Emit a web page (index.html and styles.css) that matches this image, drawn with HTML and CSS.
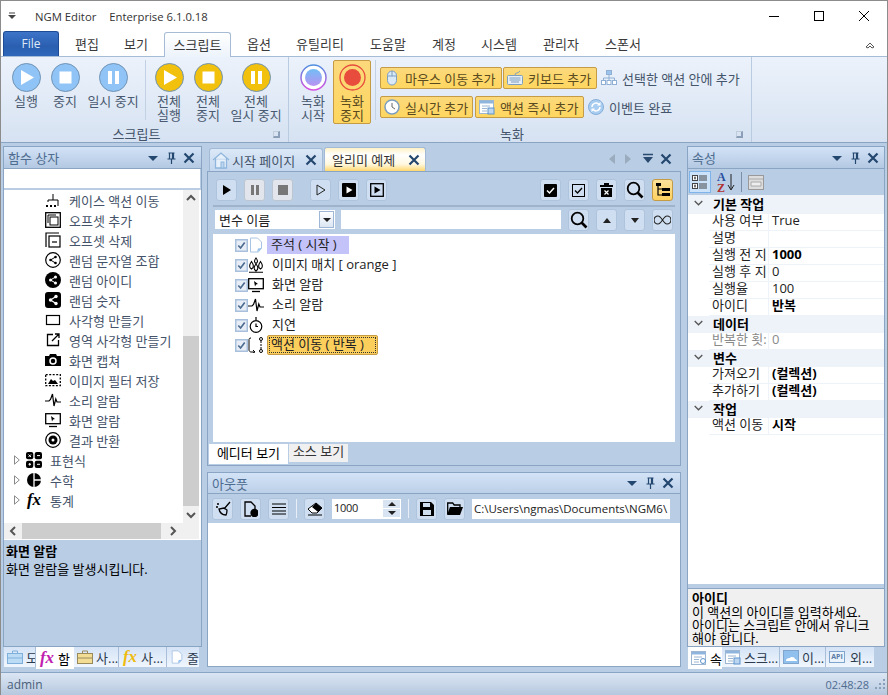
FILE: index.html

```html
<!DOCTYPE html>
<html lang="ko">
<head>
    <meta charset="UTF-8">
    <meta name="viewport" content="width=device-width, initial-scale=1.0">
    <title>NGM Editor</title>
    <link rel="stylesheet" href="styles.css">
</head>
<body>

<svg class="defs">
    <symbol id="play" viewBox="0 0 29 29"><circle cx="14.5" cy="14.5" r="14" fill="currentColor" stroke="#6f93b5"/><path d="M9 7l13 7.500-13 7.500z" fill="#fff"/></symbol>
    <symbol id="stop" viewBox="0 0 29 29"><circle cx="14.5" cy="14.5" r="14" fill="currentColor" stroke="#6f93b5"/><rect x="8.500" y="8.500" width="12" height="12" fill="#fff"/></symbol>
    <symbol id="pause" viewBox="0 0 29 29"><circle cx="14.5" cy="14.5" r="14" fill="currentColor" stroke="#6f93b5"/><rect x="9" y="8" width="4" height="13" fill="#fff"/><rect x="16" y="8" width="4" height="13" fill="#fff"/></symbol>
    <symbol id="close" viewBox="0 0 12 12"><path d="M1.500 1.500l9 9M10.500 1.500l-9 9" fill="none" stroke="currentColor" stroke-width="2.200"/></symbol>
    <symbol id="drop" viewBox="0 0 12 12"><path d="M1 4h10l-5 5z" fill="currentColor"/></symbol>
    <symbol id="pin" viewBox="0 0 12 12"><path d="M3.500 1h6M4.500 1v6h4V1M2.500 7h8M6.500 7v5M7.500 1.500v5" fill="none" stroke="currentColor" stroke-width="1.200"/></symbol>
    <symbol id="note" viewBox="0 0 16 16"><path d="M2.500 1h7l4 4v6l-3 4h-8z" fill="#fff" stroke="#a9c4e4"/><path d="M9 15l5-4-4 .5z" fill="#8fbdea"/></symbol>
    <symbol id="pulse" viewBox="0 0 16 16"><path d="M0 9h4l1.500-1.500L7.500 2l1.500 12 1.800-7 1.200 3H16" fill="none" stroke="#000" stroke-width="1.200"/></symbol>
    <symbol id="screen" viewBox="0 0 16 16"><rect x=".7" y="1.700" width="14.600" height="10" fill="#fff" stroke="#000" stroke-width="1.300"/><path d="M6 4l4 3-2 .5-1 2z"/><path d="M4 14.500h8" stroke="#000" stroke-width="1.300"/></symbol>
    <symbol id="btn-tree" viewBox="0 0 16 16"><path d="M3 2v11h4M3 7h4" fill="none" stroke="#000" stroke-width="1.200"/><rect x="1" y="1" width="5" height="3"/><rect x="7" y="6" width="8" height="3"/><rect x="7" y="11" width="8" height="3"/></symbol>
    <symbol id="search" viewBox="0 0 18 18"><circle cx="7.500" cy="7.500" r="5.800" fill="none" stroke="#000" stroke-width="1.800"/><path d="M11.500 11.500l5 5" stroke="#000" stroke-width="2.600"/></symbol>
    <symbol id="check" viewBox="0 0 13 13"><rect x=".75" y=".75" width="11.500" height="11.500" fill="#e6edf6" stroke="#a9c0dd" stroke-width="1.500"/><path d="M3.300 6.500l2.300 2.500L9.700 3.500" fill="none" stroke="#4a6a8e" stroke-width="1.600"/></symbol>
    <symbol id="doc-window" viewBox="0 0 16 16"><rect x=".5" y="1.500" width="14" height="13" fill="#fff" stroke="#9db6d2"/><rect x="1" y="2" width="13" height="2.500" fill="#8fb5dd"/><path d="M3 7h8M3 9.500h5M3 12h5" stroke="#9db6d2"/><rect x="9" y="9" width="6" height="6" fill="#bcd6f2" stroke="#5d93cc"/></symbol>
    <symbol id="expand" viewBox="0 0 6 10"><path d="M.5 .8L5.300 5 .5 9.200z" fill="#fff" stroke="#8a8a8a"/></symbol>
</svg>

<div class="window">

    <div class="titlebar">
        <svg class="sysmenu" width="8" height="8" viewBox="0 0 8 8"><path d="M1 1h6" stroke="#444"/><path d="M0 3h8l-4 4z" fill="#444"/></svg>
        <span class="app-name">NGM Editor</span>
        <span>Enterprise 6.1.0.18</span>
        <div class="winbtns">
            <svg width="10" height="10" viewBox="0 0 10 10"><path d="M0 5.500h10" stroke="#000"/></svg>
            <svg width="10" height="10" viewBox="0 0 10 10"><rect x=".5" y=".5" width="9" height="9" fill="none" stroke="#000"/></svg>
            <svg width="10" height="10" viewBox="0 0 10 10"><path d="M0 0l10 10M10 0L0 10" stroke="#000"/></svg>
        </div>
    </div>

    <div class="tabbar">
        <div class="tab-file">File</div>
        <div class="tab t1">편집</div>
        <div class="tab t2">보기</div>
        <div class="tab-active">스크립트</div>
        <div class="tab t3">옵션</div>
        <div class="tab t4">유틸리티</div>
        <div class="tab t5">도움말</div>
        <div class="tab t6">계정</div>
        <div class="tab t7">시스템</div>
        <div class="tab t8">관리자</div>
        <div class="tab t9">스폰서</div>
        <svg class="collapse" width="10" height="8" viewBox="0 0 10 8"><path d="M1 6l4-4 4 4-2 1-2-2-2 2z" fill="#fff" stroke="#555"/></svg>
    </div>

    <div class="ribbon">
        <div class="rgroup g1">
            <div class="rbody">
                <div class="rbtn w40 blue"><svg width="29" height="29"><use href="#play"/></svg><span>실행</span></div>
                <div class="rbtn w38 blue"><svg width="29" height="29"><use href="#stop"/></svg><span>중지</span></div>
                <div class="rbtn w56 blue"><svg width="29" height="29"><use href="#pause"/></svg><span>일시 중지</span></div>
                <div class="rsep"></div>
                <div class="rbtn w40 yellow"><svg width="29" height="29"><use href="#play"/></svg><span>전체<br>실행</span></div>
                <div class="rbtn w38 yellow"><svg width="29" height="29"><use href="#stop"/></svg><span>전체<br>중지</span></div>
                <div class="rbtn w56 yellow"><svg width="29" height="29"><use href="#pause"/></svg><span>전체<br>일시 중지</span></div>
            </div>
            <div class="rlabel">스크립트<i class="launcher"></i></div>
        </div>
        <div class="rgroup g2">
            <div class="rbody">
                <div class="rbtn w38">
                    <svg width="29" height="29" viewBox="0 0 29 29">
                        <defs>
                            <linearGradient id="ring" x1="0" y1="0" x2="0" y2="1"><stop offset="0" stop-color="#4f8fe0"/><stop offset="1" stop-color="#d84fe0"/></linearGradient>
                            <linearGradient id="core" x1="0" y1="0" x2="0" y2="1"><stop offset="0" stop-color="#72bdf5"/><stop offset="1" stop-color="#b893f2"/></linearGradient>
                        </defs>
                        <circle cx="14.500" cy="14.500" r="12.500" fill="#fff" stroke="url(#ring)" stroke-width="1.500"/>
                        <circle cx="14.500" cy="14.500" r="8.500" fill="url(#core)"/>
                    </svg>
                    <span>녹화<br>시작</span>
                </div>
                <div class="rbtn w38 on">
                    <svg width="29" height="29" viewBox="0 0 29 29">
                        <circle cx="14.500" cy="14.500" r="12.500" fill="none" stroke="#e74c3c" stroke-width="1.300"/>
                        <circle cx="14.500" cy="14.500" r="8.500" fill="#e74c3c"/>
                    </svg>
                    <span>녹화<br>중지</span>
                </div>
                <div class="rsep s2"></div>
                <div class="rrows">
                    <div class="rrow">
                        <div class="sbtn w122">
                            <svg width="16" height="16" viewBox="0 0 16 16"><rect x="3.500" y="1" width="9" height="14" rx="4.500" fill="#d9e9f8" stroke="#7d9ebf"/><path d="M3.500 6h9M8 1v5" stroke="#7d9ebf"/></svg>
                            마우스 이동 추가
                        </div>
                        <div class="sbtn w94">
                            <svg width="16" height="16" viewBox="0 0 16 16"><rect x=".5" y="5.500" width="15" height="9" rx="1" fill="#e6eef7" stroke="#7d9ebf"/><path d="M2.500 8h11M2.500 10h11M4 12h8" stroke="#7d9ebf"/><path d="M8 5c0-3 3-1 5-4" fill="none" stroke="#7d9ebf"/></svg>
                            키보드 추가
                        </div>
                        <div class="pbtn">
                            <svg width="16" height="16" viewBox="0 0 16 16" fill="#fff" stroke="#8fb0d4"><rect x="5.500" y=".5" width="5" height="4" fill="#9cc3ec"/><path d="M8 4.500V8M2.500 10.500V8h11v2.500M8 8v2.500" fill="none"/><rect x=".5" y="10.500" width="4" height="4"/><rect x="6" y="10.500" width="4" height="4"/><rect x="11.500" y="10.500" width="4" height="4"/></svg>
                            선택한 액션 안에 추가
                        </div>
                    </div>
                    <div class="rrow">
                        <div class="sbtn w93">
                            <svg width="16" height="16" viewBox="0 0 16 16"><circle cx="8" cy="8" r="7" fill="#fff" stroke="#7d9ebf" stroke-width="1.500"/><path d="M8 4v4l3 2" fill="none" stroke="#666"/></svg>
                            실시간 추가
                        </div>
                        <div class="sbtn w109">
                            <svg width="16" height="16"><use href="#doc-window"/></svg>
                            액션 즉시 추가
                        </div>
                        <div class="pbtn">
                            <svg width="16" height="16" viewBox="0 0 16 16"><circle cx="8" cy="8" r="7.500" fill="#a9cdf0" stroke="#85afd9"/><path d="M4 8a4 4 0 0 1 7-2.500M12 8a4 4 0 0 1-7 2.500" fill="none" stroke="#fff" stroke-width="1.500"/><path d="M12.500 3v3.500H9zM3.500 13V9.500H7z" fill="#fff"/></svg>
                            이벤트 완료
                        </div>
                    </div>
                </div>
            </div>
            <div class="rlabel">녹화<i class="launcher"></i></div>
        </div>
    </div>

    <div class="main">

        <!-- 함수 상자 -->
        <div class="panel left">
            <div class="panel-box">
                <div class="phead"><span>함수 상자</span><svg class="c1" width="12" height="12"><use href="#drop"/></svg><svg class="c2" width="12" height="12"><use href="#pin"/></svg><svg width="12" height="12"><use href="#close"/></svg></div>
                <div class="searchbox"></div>
                <div class="treewrap">
                    <div class="tree-row">
                        <div class="tree">
                            <div class="node"><svg width="16" height="16" viewBox="0 0 16 16"><path d="M8 2v6M3 8h10v6M3 8v2" fill="none" stroke="#000"/><path d="M1 13h2v2H1zM5 13h2v2H5zM9 13h2v2H9z"/></svg>케이스 액션 이동</div>
                            <div class="node"><svg width="16" height="16" viewBox="0 0 16 16" fill="none" stroke="#000"><rect x=".7" y=".7" width="14.600" height="14.600" stroke-width="1.300"/><path d="M3 11V3h8"/><rect x="5" y="5" width="8" height="8"/></svg>오프셋 추가</div>
                            <div class="node"><svg width="16" height="16" viewBox="0 0 16 16" fill="none" stroke="#000" stroke-width="1.200"><path d="M1 15V1h13"/><rect x="4" y="4" width="11" height="11"/><path d="M7 10h5"/></svg>오프셋 삭제</div>
                            <div class="node"><svg width="16" height="16" viewBox="0 0 16 16"><circle cx="8" cy="8" r="7.300" fill="none" stroke="#000" stroke-width="1.200"/><path d="M10.500 5L5.500 8l5 3" fill="none" stroke="#000"/><circle cx="10.500" cy="5" r="1.300"/><circle cx="5.500" cy="8" r="1.300"/><circle cx="10.500" cy="11" r="1.300"/></svg>랜덤 문자열 조합</div>
                            <div class="node"><svg width="16" height="16" viewBox="0 0 16 16"><circle cx="8" cy="8" r="8"/><path d="M10.500 5L5.500 8l5 3" fill="none" stroke="#fff"/><circle cx="10.500" cy="5" r="1.500" fill="#fff"/><circle cx="5.500" cy="8" r="1.500" fill="#fff"/><circle cx="10.500" cy="11" r="1.500" fill="#fff"/></svg>랜덤 아이디</div>
                            <div class="node"><svg width="16" height="16" viewBox="0 0 16 16"><rect width="16" height="16" rx="3"/><path d="M11 4.500L5.500 8l5.500 3.500" fill="none" stroke="#fff" stroke-width="1.200"/><circle cx="11" cy="4.500" r="1.700" fill="#fff"/><circle cx="5.500" cy="8" r="1.700" fill="#fff"/><circle cx="11" cy="11.500" r="1.700" fill="#fff"/></svg>랜덤 숫자</div>
                            <div class="node"><svg width="16" height="16" viewBox="0 0 16 16"><rect x="1.500" y="3.500" width="13" height="9" fill="none" stroke="#000" stroke-width="1.200"/></svg>사각형 만들기</div>
                            <div class="node"><svg width="16" height="16" viewBox="0 0 16 16" fill="none" stroke="#000" stroke-width="1.300"><path d="M8 2.500H2.500v11h11V8M7 9l7-7M10 2h4v4"/></svg>영역 사각형 만들기</div>
                            <div class="node"><svg width="16" height="16" viewBox="0 0 16 16"><path d="M0 4h4l1-2h6l1 2h4v10H0z"/><circle cx="8" cy="9" r="3" fill="none" stroke="#fff" stroke-width="1.500"/></svg>화면 캡쳐</div>
                            <div class="node"><svg width="16" height="16" viewBox="0 0 16 16"><rect x=".7" y="2.700" width="14.600" height="11" fill="none" stroke="#000" stroke-width="1.300" stroke-dasharray="2 1.500"/><path d="M3 12l3-5 2 2 2-1 3 4z"/></svg>이미지 필터 저장</div>
                            <div class="node"><svg width="16" height="16"><use href="#pulse"/></svg>소리 알람</div>
                            <div class="node"><svg width="16" height="16"><use href="#screen"/></svg>화면 알람</div>
                            <div class="node"><svg width="16" height="16" viewBox="0 0 16 16"><circle cx="8" cy="8" r="7.300" fill="none" stroke="#000" stroke-width="1.200"/><circle cx="8" cy="8" r="4.500"/><circle cx="8" cy="8" r="1.500" fill="#fff"/></svg>결과 반환</div>
                            <div class="node top"><svg class="arrow" width="6" height="10"><use href="#expand"/></svg><svg width="16" height="16" viewBox="0 0 16 16"><rect width="7.300" height="7.300" rx="2"/><rect x="8.700" width="7.300" height="7.300" rx="2"/><rect y="8.700" width="7.300" height="7.300" rx="2"/><rect x="8.700" y="8.700" width="7.300" height="7.300" rx="2"/><path d="M2.500 12.300h2.500M3.700 11v2.600M11 12.300h3M11 3.600h3M2.500 2.500l2.500 2.500M5 2.500L2.500 5" stroke="#fff"/></svg>표현식</div>
                            <div class="node top"><svg class="arrow" width="6" height="10"><use href="#expand"/></svg><svg width="16" height="16" viewBox="0 0 16 16"><circle cx="8" cy="8" r="7"/><path d="M8 0v16M8 8h8" stroke="#fff" stroke-width="1.300"/></svg>수학</div>
                            <div class="node top"><svg class="arrow" width="6" height="10"><use href="#expand"/></svg><span class="fx black">fx</span>통계</div>
                        </div>
                        <div class="vscroll">
                            <svg width="16" height="17" viewBox="0 0 16 17"><path d="M4 10l4-4 4 4" fill="none" stroke="#555" stroke-width="2"/></svg>
                            <div class="vspace"></div>
                            <div class="vthumb"></div>
                            <svg width="16" height="17" viewBox="0 0 16 17"><path d="M4 7l4 4 4-4" fill="none" stroke="#555" stroke-width="2"/></svg>
                        </div>
                    </div>
                    <div class="hscroll">
                        <svg width="17" height="16" viewBox="0 0 17 16"><path d="M11 4L7 8l4 4" fill="none" stroke="#555" stroke-width="2"/></svg>
                        <div class="hthumb"></div>
                        <svg width="17" height="16" viewBox="0 0 17 16"><path d="M6 4l4 4-4 4" fill="none" stroke="#555" stroke-width="2"/></svg>
                    </div>
                </div>
                <div class="help">
                    <b>화면 알람</b>
                    <p>화면 알람을 발생시킵니다.</p>
                </div>
            </div>
            <div class="ptabs">
                <div class="ptab w32"><svg width="16" height="14" viewBox="0 0 16 14"><rect x=".5" y="3.500" width="15" height="10" fill="#bcdcf5" stroke="#7fb0dc"/><path d="M5.500 3.500V1h5v2.500M0 8h16" fill="none" stroke="#7fb0dc"/></svg>도</div>
                <div class="ptab w38 active"><span class="fx purple">fx</span>함</div>
                <div class="ptab w45"><svg width="16" height="14" viewBox="0 0 16 14"><rect x=".5" y="3.500" width="15" height="10" fill="#f3dd94" stroke="#998a5c"/><path d="M5.500 3.500V1h5v2.500M0 8h16" fill="none" stroke="#998a5c"/></svg>사...</div>
                <div class="ptab w48"><span class="fx gold">fx</span>사...</div>
                <div class="ptab w32 last"><svg width="14" height="16"><use href="#note"/></svg>줄</div>
            </div>
        </div>

        <!-- 가운데 -->
        <div class="center">
            <div class="doctabs">
                <div class="doctab home">
                    <svg width="18" height="17" viewBox="0 0 18 17"><path d="M1 8l8-7 8 7M3.500 6.500V16h11V6.500" fill="#e6f0fa" stroke="#8fb5dc" stroke-width="1.300"/><rect x="9" y="10" width="3" height="6" fill="#bcd6f2" stroke="#8fb5dc"/></svg>
                    <span>시작 페이지</span>
                    <svg class="doc-x" width="12" height="12"><use href="#close"/></svg>
                </div>
                <div class="doctab sel">
                    <span>알리미 예제</span>
                    <svg class="doc-x" width="12" height="12"><use href="#close"/></svg>
                </div>
                <div class="docctl">
                    <svg width="6" height="10" viewBox="0 0 6 10"><path d="M6 0v10L0 5z" fill="#9aabbd"/></svg>
                    <svg class="nx" width="6" height="10" viewBox="0 0 6 10"><path d="M0 0v10l6-5z" fill="#9aabbd"/></svg>
                    <svg width="12" height="12" viewBox="0 0 12 12"><path d="M1 1.500h10" stroke="#2b4a6f" stroke-width="1.500"/><path d="M1 4h10l-5 6z" fill="#2b4a6f"/></svg>
                    <svg width="12" height="12"><use href="#close"/></svg>
                </div>
            </div>

            <div class="editor">
                <div class="toolbar">
                    <div class="tbtn"><svg width="10" height="10" viewBox="0 0 10 10"><path d="M1 0l8 5-8 5z"/></svg></div>
                    <div class="tbtn off"><svg width="10" height="10" viewBox="0 0 10 10"><path d="M1 0h3v10H1zM6 0h3v10H6z" fill="#777"/></svg></div>
                    <div class="tbtn off"><svg width="10" height="10" viewBox="0 0 10 10"><rect width="10" height="10" fill="#777"/></svg></div>
                    <div class="tbtn gap"><svg width="10" height="12" viewBox="0 0 10 12"><path d="M1 1l8 5-8 5z" fill="none" stroke="#222"/></svg></div>
                    <div class="tbtn"><svg width="14" height="14" viewBox="0 0 14 14"><rect width="14" height="14" rx="1"/><path d="M4.500 3.500l6 3.500-6 3.500z" fill="#fff"/></svg></div>
                    <div class="tbtn"><svg width="14" height="14" viewBox="0 0 14 14"><rect x=".7" y=".7" width="12.600" height="12.600" fill="none" stroke="#000" stroke-width="1.300"/><path d="M4.500 3.500l6 3.500-6 3.500z"/></svg></div>
                    <div class="tspace"></div>
                    <div class="tbtn"><svg width="13" height="13" viewBox="0 0 13 13"><rect width="13" height="13" rx="1"/><path d="M3 6.500l2.500 2.500L10 4" fill="none" stroke="#fff" stroke-width="1.500"/></svg></div>
                    <div class="tbtn"><svg width="13" height="13" viewBox="0 0 13 13"><rect x=".5" y=".5" width="12" height="12" fill="none" stroke="#000"/><path d="M3 6.500l2.500 2.500L10 4" fill="none" stroke="#000" stroke-width="1.300"/></svg></div>
                    <div class="tbtn"><svg width="13" height="14" viewBox="0 0 13 14"><path d="M4 0h5v2h4v2H0V2h4zM1 5h11v9H1z"/><path d="M4.500 7.500l4 4M8.500 7.500l-4 4" stroke="#fff" stroke-width="1.200"/></svg></div>
                    <div class="tbtn"><svg width="18" height="18"><use href="#search"/></svg></div>
                    <div class="tbtn on"><svg width="16" height="16"><use href="#btn-tree"/></svg></div>
                </div>
                <div class="findrow">
                    <div class="combo"><span>변수 이름</span><i class="combo-btn"></i></div>
                    <div class="findbox"></div>
                    <div class="tbtn"><svg width="18" height="18"><use href="#search"/></svg></div>
                    <div class="tbtn"><svg width="8" height="5" viewBox="0 0 8 5"><path d="M0 5l4-5 4 5z" fill="#222"/></svg></div>
                    <div class="tbtn"><svg width="8" height="5" viewBox="0 0 8 5"><path d="M0 0l4 5 4-5z" fill="#222"/></svg></div>
                    <div class="tbtn"><svg width="17" height="10" viewBox="0 0 17 10"><path d="M8.500 5C6.500 2 5.500 1 4 1a4 4 0 0 0 0 8c1.500 0 2.500-1 4.500-4s3-4 4.500-4a4 4 0 0 1 0 8c-1.500 0-2.500-1-4.500-4z" fill="none" stroke="#222" stroke-width="1.200"/></svg></div>
                </div>
                <div class="actions">
                    <div class="action"><svg width="13" height="13"><use href="#check"/></svg><svg width="16" height="16"><use href="#note"/></svg><span class="tag comment">주석 ( 시작 )</span></div>
                    <div class="action"><svg width="13" height="13"><use href="#check"/></svg><svg width="16" height="16" viewBox="0 0 16 16" fill="none" stroke="#000" stroke-width="1.100"><path d="M8 1C6 3.500 6 5 8 6.500 10 5 10 3.500 8 1zM3.500 4.500C1 8 1 10.500 3.500 12 6 10.500 6 8 3.500 4.500zM12.500 4.500C10 8 10 10.500 12.500 12 15 10.500 15 8 12.500 4.500zM8 7C5.500 10 5.500 12.500 8 14 10.500 12.500 10.500 10 8 7zM1 15.300h14"/></svg><span class="tag">이미지 매치 [ orange ]</span></div>
                    <div class="action"><svg width="13" height="13"><use href="#check"/></svg><svg width="16" height="16"><use href="#screen"/></svg><span class="tag">화면 알람</span></div>
                    <div class="action"><svg width="13" height="13"><use href="#check"/></svg><svg width="16" height="16"><use href="#pulse"/></svg><span class="tag">소리 알람</span></div>
                    <div class="action"><svg width="13" height="13"><use href="#check"/></svg><svg width="16" height="16" viewBox="0 0 16 16" fill="none" stroke="#000" stroke-width="1.200"><circle cx="8" cy="9.500" r="5.800"/><path d="M8 0v3M8 10V6.500M8 9.500h2"/></svg><span class="tag">지연</span></div>
                    <div class="action"><svg width="13" height="13"><use href="#check"/></svg><svg width="16" height="16" viewBox="0 0 16 16" fill="none" stroke="#000"><path d="M3 1C1 1 1 2 1 3v10c0 1 1 2 2 2h3M5 13l2 2-2 1"/><circle cx="13" cy="2" r="1.500"/><circle cx="13" cy="14" r="1.500"/><path d="M13 4v8" stroke-dasharray="2 1"/></svg><span class="tag current">액션 이동 ( 반복 )</span></div>
                </div>
                <div class="viewtabs">
                    <div class="viewtab sel">에디터 보기</div>
                    <div class="viewtab">소스 보기</div>
                </div>
            </div>

            <div class="output">
                <div class="phead"><span>아웃풋</span><svg class="c1" width="12" height="12"><use href="#drop"/></svg><svg class="c2" width="12" height="12"><use href="#pin"/></svg><svg width="12" height="12"><use href="#close"/></svg></div>
                <div class="outbar">
                    <div class="tbtn"><svg width="16" height="16" viewBox="0 0 16 16" fill="none" stroke="#000" stroke-width="1.300"><path d="M15 1L9 8M2 3h2M1 6h2M4 8c1 5 5 6 7 6 1-2 1-4 1-5l-3-2z"/></svg></div>
                    <div class="tbtn"><svg width="14" height="16" viewBox="0 0 14 16" fill="none" stroke="#000" stroke-width="1.300"><path d="M7 15H1V1h6l4 4v4"/><circle cx="10.500" cy="12" r="3.500" fill="#000"/></svg></div>
                    <div class="tbtn"><svg width="14" height="12" viewBox="0 0 14 12"><path d="M0 1h14M0 4.500h14M0 8h14M0 11h14" stroke="#000" stroke-width="1.200"/></svg></div>
                    <i class="osep"></i>
                    <div class="tbtn"><svg width="16" height="14" viewBox="0 0 16 14"><path d="M9 1l6 5-5 5H5L1 7z" fill="#fff" stroke="#000"/><path d="M9 1l6 5-4 4-6-5z"/><path d="M1 13h14" stroke="#000"/></svg></div>
                    <div class="spin"><span>1000</span><div class="spin-btns"><i><svg width="8" height="4" viewBox="0 0 8 4"><path d="M0 4l4-4 4 4z" fill="#222"/></svg></i><i><svg width="8" height="4" viewBox="0 0 8 4"><path d="M0 0l4 4 4-4z" fill="#222"/></svg></i></div></div>
                    <i class="osep"></i>
                    <div class="tbtn"><svg width="14" height="14" viewBox="0 0 14 14"><path d="M0 0h11l3 3v11H0z"/><rect x="3" y="1" width="7" height="4" fill="#cfdff0"/><rect x="3" y="8" width="8" height="5" fill="#cfdff0"/></svg></div>
                    <div class="tbtn"><svg width="16" height="13" viewBox="0 0 16 13"><path d="M.7 12V1h5l1.500 2H13v2" fill="none" stroke="#000" stroke-width="1.300"/><path d="M3 5h13l-3 8H0z"/></svg></div>
                    <div class="pathbox">C:\Users\ngmas\Documents\NGM6\</div>
                </div>
                <div class="outtext"></div>
            </div>
        </div>

        <!-- 속성 -->
        <div class="panel right">
            <div class="panel-box">
                <div class="phead"><span>속성</span><svg class="c1" width="12" height="12"><use href="#drop"/></svg><svg class="c2" width="12" height="12"><use href="#pin"/></svg><svg width="12" height="12"><use href="#close"/></svg></div>
                <div class="propbar">
                    <div class="pb on"><svg width="18" height="18" viewBox="0 0 18 18" fill="none" stroke="#444"><rect x="1.500" y="2.500" width="5" height="5" fill="#fff"/><rect x="1.500" y="10.500" width="5" height="5" fill="#fff"/><path d="M8 3h8M8 5h8M8 7h8M8 11h8M8 13h8M8 15h8M3 5h2M3 13h2M4 3.500v3M4 11.500v3" stroke-width="1"/></svg></div>
                    <div class="pb az"><span class="az-a">A</span><span class="az-z">Z</span><svg width="8" height="17" viewBox="0 0 8 17"><path d="M4 0v15M1 11l3 5 3-5" fill="none" stroke="#222"/></svg></div>
                    <i class="psep"></i>
                    <div class="pb pages"><svg width="16" height="15" viewBox="0 0 16 15"><rect x=".5" y=".5" width="15" height="14" fill="#ddd" stroke="#999"/><path d="M1 4h14M3 7h10v4H3z" fill="#eee" stroke="#aaa"/></svg></div>
                </div>
                <div class="grid">
                    <div class="cat"><svg width="9" height="6" viewBox="0 0 9 6"><path d="M.7 1l3.800 3.800L8.300 1" fill="none" stroke="#555" stroke-width="1.300"/></svg><b>기본 작업</b></div>
                    <div class="prop"><span class="k">사용 여부</span><span class="v">True</span></div>
                    <div class="prop"><span class="k">설명</span><span class="v"></span></div>
                    <div class="prop"><span class="k">실행 전 지</span><span class="v bold">1000</span></div>
                    <div class="prop"><span class="k">실행 후 지</span><span class="v">0</span></div>
                    <div class="prop"><span class="k">실행율</span><span class="v">100</span></div>
                    <div class="prop"><span class="k">아이디</span><span class="v bold">반복</span></div>
                    <div class="cat"><svg width="9" height="6" viewBox="0 0 9 6"><path d="M.7 1l3.800 3.800L8.300 1" fill="none" stroke="#555" stroke-width="1.300"/></svg><b>데이터</b></div>
                    <div class="prop dim"><span class="k">반복한 횟:</span><span class="v">0</span></div>
                    <div class="cat"><svg width="9" height="6" viewBox="0 0 9 6"><path d="M.7 1l3.800 3.800L8.300 1" fill="none" stroke="#555" stroke-width="1.300"/></svg><b>변수</b></div>
                    <div class="prop"><span class="k">가져오기</span><span class="v bold">(컬렉션)</span></div>
                    <div class="prop"><span class="k">추가하기</span><span class="v bold">(컬렉션)</span></div>
                    <div class="cat"><svg width="9" height="6" viewBox="0 0 9 6"><path d="M.7 1l3.800 3.800L8.300 1" fill="none" stroke="#555" stroke-width="1.300"/></svg><b>작업</b></div>
                    <div class="prop"><span class="k">액션 이동</span><span class="v bold">시작</span></div>
                </div>
                <div class="prophelp">
                    <b>아이디</b>
                    <p>이 액션의 아이디를 입력하세요.<br>아이디는 스크립트 안에서 유니크<br>해야 합니다.</p>
                </div>
            </div>
            <div class="ptabs">
                <div class="ptab w34 active"><svg width="16" height="16" viewBox="0 0 16 16"><rect x=".5" y="1.500" width="14" height="13" fill="#fff" stroke="#9db6d2"/><rect x="1" y="2" width="13" height="2.500" fill="#8fb5dd"/><path d="M3 7h8M3 9.500h5M3 12h5" stroke="#9db6d2"/><circle cx="12" cy="11" r="2.500" fill="#fff" stroke="#5d93cc"/></svg>속</div>
                <div class="ptab w58"><svg width="16" height="16"><use href="#doc-window"/></svg>스크...</div>
                <div class="ptab w46"><svg width="16" height="14" viewBox="0 0 16 14"><rect x=".5" y=".5" width="15" height="13" fill="#8fc0ee" stroke="#7fa5cc"/><path d="M3 11c0-3 3-3 4-3 1-2 5-1 5 1 1 0 2 1 2 2z" fill="#fff"/></svg>이...</div>
                <div class="ptab w48 last"><span class="api">API</span>외...</div>
            </div>
        </div>

    </div>

    <div class="statusbar">
        <span>admin</span>
        <span class="clock">02:48:28</span>
        <svg width="10" height="10" viewBox="0 0 10 10" fill="#8aa0ba"><rect x="8" y="8" width="2" height="2"/><rect x="4" y="8" width="2" height="2"/><rect y="8" width="2" height="2"/><rect x="8" y="4" width="2" height="2"/><rect x="4" y="4" width="2" height="2"/><rect x="8" width="2" height="2"/></svg>
    </div>

</div>

</body>
</html>
```

FILE: styles.css

```css
* {
    box-sizing: border-box;
}
html, body {
    margin: 0;
    padding: 0;
}
body {
    width: 888px;
    height: 695px;
    overflow: hidden;
    font-family: "Open Sans", "Noto Sans CJK KR", sans-serif;
    font-size: 12px;
    color: #222;
}
.defs {
    display: none;
}
svg {
    flex: none;
    display: block;
}
.window {
    width: 888px;
    height: 695px;
    display: flex;
    flex-direction: column;
    border: 1px solid #8c8c8c;
    border-bottom: none;
    background-color: #fff;
}

/* title bar */
.titlebar {
    height: 30px;
    flex: none;
    display: flex;
    align-items: center;
    padding-left: 7px;
    font-size: 11.3px;
    color: #333;
}
.app-name {
    margin-left: 19px;
    margin-right: 13px;
}
.winbtns {
    margin-left: auto;
    margin-right: 18px;
    display: flex;
    gap: 35px;
}

/* tabs */
.tabbar {
    height: 26px;
    flex: none;
    display: flex;
    align-items: flex-end;
    padding-left: 2px;
    border-bottom: 1px solid #a5bbd6;
    font-size: 13px;
    color: #3a3a3a;
}
.tab-file {
    width: 56px;
    height: 25px;
    background: linear-gradient(#3d74c8, #2a5fb0 60%, #2f67bb);
    border: 1px solid #1e4c94;
    border-bottom: none;
    border-radius: 3px 3px 0 0;
    color: #dfe9f7;
    text-align: center;
    line-height: 24px;
    font-size: 12px;
}
.tab {
    height: 24px;
    line-height: 24px;
    text-align: center;
}
.t1 { width: 48px; margin-left: 4px; }
.t2 { width: 50px; }
.tab-active {
    width: 67px;
    height: 25px;
    margin-bottom: -1px;
    margin-left: 3px;
    background: linear-gradient(#fff, #edf3fb);
    border: 1px solid #a5bbd6;
    border-bottom: none;
    border-radius: 3px 3px 0 0;
    text-align: center;
    line-height: 24px;
}
.t3 { width: 56px; }
.t4 { width: 66px; }
.t5 { width: 70px; }
.t6 { width: 42px; }
.t7 { width: 68px; }
.t8 { width: 56px; }
.t9 { width: 68px; }
.collapse {
    margin-left: auto;
    margin-right: 12px;
    margin-bottom: 7px;
}

/* ribbon */
.ribbon {
    height: 86px;
    flex: none;
    display: flex;
    background: linear-gradient(#ecf2fb, #d6e2f2);
    border-bottom: 1px solid #8aa4c4;
    font-size: 13px;
    color: #44546a;
}
.rgroup {
    display: flex;
    flex-direction: column;
    border-right: 1px solid #b9cbe0;
}
.g1 {
    width: 288px;
    padding-left: 5px;
}
.g2 {
    width: 463px;
    padding-left: 5px;
}
.rbody {
    height: 64px;
    margin-top: 3px;
    display: flex;
}
.rlabel {
    flex: 1;
    display: flex;
    align-items: center;
    justify-content: center;
    line-height: 14px;
    padding-top: 2px;
    padding-right: 21px;
    position: relative;
}
.launcher {
    position: absolute;
    right: 8px;
    bottom: 4px;
    width: 7px;
    height: 7px;
    border-right: 2px solid #8ba0b8;
    border-bottom: 2px solid #8ba0b8;
    border-left: 1px solid #c0ccda;
    border-top: 1px solid #c0ccda;
}
.rbtn {
    display: flex;
    flex-direction: column;
    align-items: center;
    padding-top: 3px;
    line-height: 14px;
    text-align: center;
    white-space: nowrap;
    color: #4a5a70;
}
.rbtn span {
    margin-top: 2px;
}
.w40 { width: 40px; }
.w38 { width: 38px; }
.w56 { width: 56px; margin-left: 1px; }
.blue { color: #91c4f6; }
.yellow { color: #f2c10d; }
.blue span, .yellow span {
    color: #4a5a70;
}
.rbtn.on {
    background: linear-gradient(#fbd97c, #ffd65f);
    border: 1px solid #c59b45;
    border-radius: 2px;
    padding-top: 2px;
    margin-left: 1px;
    color: #5a4a20;
}
.rsep {
    width: 1px;
    height: 60px;
    margin: 0 3px 0 4px;
    background-color: #c2d2e4;
}
.s2 {
    margin: 0 4px 0 4px;
}
.rrows {
    display: flex;
    flex-direction: column;
    gap: 7px;
    padding-top: 7px;
}
.rrow {
    display: flex;
    height: 22px;
    gap: 1px;
}
.sbtn {
    display: flex;
    align-items: center;
    gap: 5px;
    padding-left: 3px;
    white-space: nowrap;
    background: linear-gradient(#fbd97c, #ffd65f);
    border: 1px solid #c59b45;
    border-radius: 2px;
    color: #5a4a20;
}
.w122 { width: 122px; }
.w94 { width: 94px; }
.w93 { width: 93px; margin-right: 1px; }
.w109 { width: 109px; }
.pbtn {
    display: flex;
    align-items: center;
    gap: 5px;
    margin-left: 3px;
    white-space: nowrap;
}

/* main area */
.main {
    flex: 1;
    min-height: 0;
    display: flex;
    padding: 3px 2px 3px 2px;
    background-color: #b9cde5;
}
.panel {
    display: flex;
    flex-direction: column;
}
.left {
    width: 199px;
    margin-right: 5px;
}
.right {
    width: 198px;
    margin-left: 6px;
}
.panel-box {
    flex: 1;
    min-height: 0;
    display: flex;
    flex-direction: column;
    border: 1px solid #8aa4c4;
}
.phead {
    height: 22px;
    flex: none;
    display: flex;
    align-items: center;
    gap: 6px;
    padding: 0 6px 0 4px;
    background: linear-gradient(#d3e3f7, #b3c8e2);
    border-bottom: 1px solid #8aa4c4;
    font-size: 13px;
    color: #4e6c90;
}
.right .phead {
    padding-right: 5px;
}
.phead span {
    flex: 1;
}
.phead svg {
    color: #24476f;
}
.searchbox {
    height: 19px;
    flex: none;
    margin-right: 1px;
    background-color: #fff;
}
.treewrap {
    height: 350px;
    flex: none;
    margin-top: 2px;
    display: flex;
    flex-direction: column;
    background-color: #fff;
    border-right: 2px solid #fff;
    border-bottom: 1px solid #fff;
}
.tree-row {
    flex: 1;
    min-height: 0;
    display: flex;
}
.tree {
    flex: 1;
    overflow: hidden;
}
.node {
    height: 20px;
    display: flex;
    align-items: center;
    padding-left: 41px;
    gap: 8px;
    font-size: 13px;
    color: #45536a;
    white-space: nowrap;
}
.node.top {
    padding-left: 10px;
    gap: 0;
}
.node.top svg, .node.top .fx {
    margin-right: 8px;
}
.node.top .arrow {
    margin-right: 6px;
}
.fx {
    width: 16px;
    flex: none;
    font-family: "Liberation Serif", serif;
    font-style: italic;
    font-weight: bold;
    font-size: 17px;
    line-height: 16px;
    text-align: center;
}
.black { color: #000; }
.purple { color: #c020b0; }
.gold { color: #eebb10; }
.vscroll {
    width: 16px;
    flex: none;
    display: flex;
    flex-direction: column;
    background-color: #f0f0f0;
}
.vspace {
    flex: 1;
}
.vthumb {
    height: 170px;
    background-color: #cdcdcd;
}
.hscroll {
    height: 16px;
    flex: none;
    display: flex;
    background-color: #f0f0f0;
}
.hthumb {
    width: 139px;
    background-color: #cdcdcd;
    margin-left: 1px;
    margin-right: 4px;
}
.help {
    flex: 1;
    padding: 3px 2px;
    font-size: 13px;
    color: #000;
    line-height: 17px;
}
.help b {
    display: block;
}
.help p {
    margin: 1px 0 0 0;
}
.ptabs {
    height: 22px;
    flex: none;
    display: flex;
    padding-left: 1px;
    font-size: 13px;
    color: #2c3a4e;
}
.ptab {
    height: 20px;
    display: flex;
    align-items: center;
    gap: 3px;
    padding-left: 3px;
    background: linear-gradient(#d4e3f6, #f0f6fd);
    border-right: 1px solid #a9bfd9;
    white-space: nowrap;
    overflow: hidden;
}
.ptab.last {
    border-right: none;
}
.ptab.active {
    height: 22px;
    background: #fff;
    color: #000;
    border-right: none;
}
.w32 { width: 32px; }
.w34 { width: 34px; }
.w45 { width: 45px; }
.w46 { width: 46px; }
.w48 { width: 48px; }
.w58 { width: 58px; }
.api {
    font-size: 7px;
    font-weight: bold;
    width: 16px;
    height: 12px;
    line-height: 10px;
    text-align: center;
    color: #5a7ba5;
    border: 1px solid #7fa5cc;
    background-color: #eaf3fc;
    margin-right: 2px;
}

/* center */
.center {
    width: 474px;
    display: flex;
    flex-direction: column;
}
.doctabs {
    height: 25px;
    flex: none;
    display: flex;
    align-items: flex-end;
    padding-left: 2px;
    font-size: 13px;
}
.doctab {
    height: 23px;
    display: flex;
    align-items: center;
    border: 1px solid #a3bad6;
    border-bottom: none;
    border-radius: 3px 3px 0 0;
    color: #44546a;
}
.doctab.home {
    width: 114px;
    margin-right: 1px;
    padding-left: 2px;
    gap: 2px;
    background: linear-gradient(#dbe8f7, #c4d7ee);
}
.doctab.sel {
    width: 102px;
    height: 24px;
    padding-left: 7px;
    background: linear-gradient(#fff2c6, #fff 30%, #fff8e0 70%, #ffd76e);
    color: #333;
}
.doc-x {
    margin-left: auto;
    margin-right: 5px;
    color: #24476f;
}
.docctl {
    margin-left: auto;
    margin-right: 9px;
    margin-bottom: 6px;
    display: flex;
    align-items: center;
    gap: 6px;
    color: #24476f;
}
.nx {
    margin: 0 5px 0 4px;
}
.editor {
    height: 295px;
    flex: none;
    display: flex;
    flex-direction: column;
    border: 1px solid #8aa4c4;
    padding: 7px 5px 0 5px;
}
.toolbar {
    display: flex;
    gap: 7px;
    flex: none;
    padding: 0 2px 4px 3px;
    border-bottom: 2px solid #9fb3cb;
}
.tbtn {
    width: 21px;
    height: 22px;
    flex: none;
    display: flex;
    align-items: center;
    justify-content: center;
    background-color: #cfdff1;
    border: 1px solid #aec3dc;
    border-radius: 3px;
}
.tbtn.off {
    background-color: #e2e6ec;
    border-color: #bcc6d2;
}
.tbtn.on {
    background: linear-gradient(#fbe19a, #ffd260);
    border-color: #c59b45;
}
.tbtn.gap {
    margin-left: 10px;
}
.tspace {
    flex: 1;
}
.findrow {
    display: flex;
    gap: 7px;
    flex: none;
    margin-top: 2px;
    height: 22px;
    padding: 0 2px;
}
.combo {
    width: 120px;
    height: 19px;
    margin-top: 1px;
    display: flex;
    align-items: center;
    justify-content: space-between;
    padding: 0 1px 0 4px;
    background-color: #fff;
    font-size: 13px;
    color: #222;
}
.combo-btn {
    width: 15px;
    height: 17px;
    display: block;
    border: 1px solid #9fb7d6;
    background: linear-gradient(to bottom, #fff, #dbe6f3);
    position: relative;
}
.combo-btn::after {
    content: "";
    position: absolute;
    left: 3px;
    top: 6px;
    border: 4px solid transparent;
    border-top-color: #222;
}
.findbox {
    width: 220px;
    height: 19px;
    margin-top: 1px;
    margin-left: -1px;
    background-color: #fff;
}
.actions {
    height: 208px;
    flex: none;
    margin: 3px 0 2px 0;
    padding-top: 1px;
    background-color: #fff;
}
.action {
    height: 20px;
    display: flex;
    align-items: center;
    padding-left: 22px;
    font-size: 13px;
    color: #222;
}
.action svg + svg {
    margin-left: 0;
}
.tag {
    margin-left: 4px;
    padding: 0 4px;
    height: 18px;
    line-height: 16px;
    white-space: nowrap;
}
.comment {
    background-color: #c3c3f9;
    width: 82px;
    margin-left: 3px;
}
.current {
    width: 111px;
    height: 20px;
    margin-left: 3px;
    padding: 0 3px;
    background-color: #fcce5c;
    border: 1px solid #c59b45;
    border-radius: 2px;
    outline: 1px dotted #333;
    outline-offset: -3px;
}
.viewtabs {
    display: flex;
    margin-left: -4px;
    font-size: 13px;
}
.viewtab {
    width: 59px;
    height: 18px;
    text-align: center;
    line-height: 15px;
    background-color: #f0f0f0;
    color: #333;
}
.viewtab.sel {
    width: 79px;
    height: 20px;
    line-height: 19px;
    background-color: #fff;
    color: #000;
    margin-right: 1px;
}
.output {
    flex: 1;
    min-height: 0;
    margin: 6px 0 2px 0;
    display: flex;
    flex-direction: column;
    border: 1px solid #8aa4c4;
}
.output .phead {
    height: 21px;
    background: linear-gradient(#d3e3f7, #bcd0e8);
}
.outbar {
    height: 29px;
    flex: none;
    display: flex;
    align-items: center;
    gap: 7px;
    padding-left: 4px;
}
.osep {
    width: 1px;
    height: 19px;
    display: block;
    background-color: #e8eef6;
}
.spin {
    width: 69px;
    height: 20px;
    display: flex;
    align-items: center;
    justify-content: space-between;
    padding: 0 1px 0 2px;
    background-color: #fff;
    font-size: 11px;
    letter-spacing: -.3px;
}
.spin span {
    padding-bottom: 2px;
}
.spin-btns {
    display: flex;
    flex-direction: column;
    width: 17px;
    gap: 1px;
}
.spin-btns i {
    height: 8px;
    display: flex;
    align-items: center;
    justify-content: center;
    background-color: #d8e4f2;
}
.pathbox {
    width: 198px;
    height: 20px;
    padding-left: 2px;
    line-height: 20px;
    background-color: #fff;
    font-size: 11.5px;
    color: #222;
    white-space: nowrap;
    overflow: hidden;
}
.outtext {
    flex: 1;
    background-color: #fff;
}

/* properties */
.propbar {
    height: 26px;
    flex: none;
    display: flex;
    align-items: center;
    gap: 2px;
    padding-left: 1px;
}
.pb {
    width: 22px;
    height: 22px;
    display: flex;
    align-items: center;
    justify-content: center;
}
.pb.on {
    background-color: #cbe2f9;
    border: 1px solid #7eb4ea;
}
.pb.pages {
    width: 16px;
}
.az {
    width: 20px;
    display: grid;
    grid-template-columns: 10px 8px;
    margin-left: 3px;
    font-family: "Liberation Serif", serif;
    font-size: 12px;
    font-weight: bold;
    line-height: 10px;
}
.az-a { color: #2a50a0; grid-column: 1; grid-row: 1; }
.az-z { color: #b03030; grid-column: 1; grid-row: 2; }
.az svg { grid-column: 2; grid-row: 1 / 3; }
.psep {
    width: 1px;
    height: 20px;
    display: block;
    background-color: #7e8fa5;
    margin: 0 4px 0 3px;
}
.grid {
    flex: 1;
    min-height: 0;
    background-color: #fff;
    font-size: 13px;
    color: #222;
}
.cat {
    height: 17px;
    display: flex;
    align-items: center;
    padding-left: 6px;
    padding-bottom: 3px;
    background-color: #eef3fa;
    color: #000;
}
.cat:first-child {
    height: 19px;
}
.cat b {
    margin-left: 10px;
}
.prop {
    height: 17px;
    display: flex;
    margin-left: 21px;
    border-bottom: 1px solid #eef3fa;
    line-height: 13px;
    white-space: nowrap;
}
.k {
    width: 60px;
    padding-left: 3px;
    overflow: hidden;
    border-right: 1px solid #eef3fa;
}
.v {
    padding-left: 3px;
}
.bold {
    font-weight: bold;
    color: #000;
}
.dim {
    color: #8a8a8a;
}
.prophelp {
    height: 58px;
    flex: none;
    margin-top: 4px;
    padding: 1px 4px;
    background-color: #f0f0f0;
    border-top: 1px solid #8aa4c4;
    font-size: 13px;
    line-height: 13px;
    color: #000;
}
.prophelp b {
    display: block;
    line-height: 16px;
}
.prophelp p {
    margin: 0;
}

/* status */
.statusbar {
    height: 23px;
    flex: none;
    display: flex;
    align-items: center;
    padding: 0 2px 0 6px;
    background: linear-gradient(#dbe6f4, #b6c8de);
    border-top: 1px solid #8aa4c4;
    font-size: 12px;
    color: #4a5f7a;
}
.clock {
    margin-left: auto;
    margin-right: 6px;
    font-size: 11px;
    color: #4e6c90;
}
```
